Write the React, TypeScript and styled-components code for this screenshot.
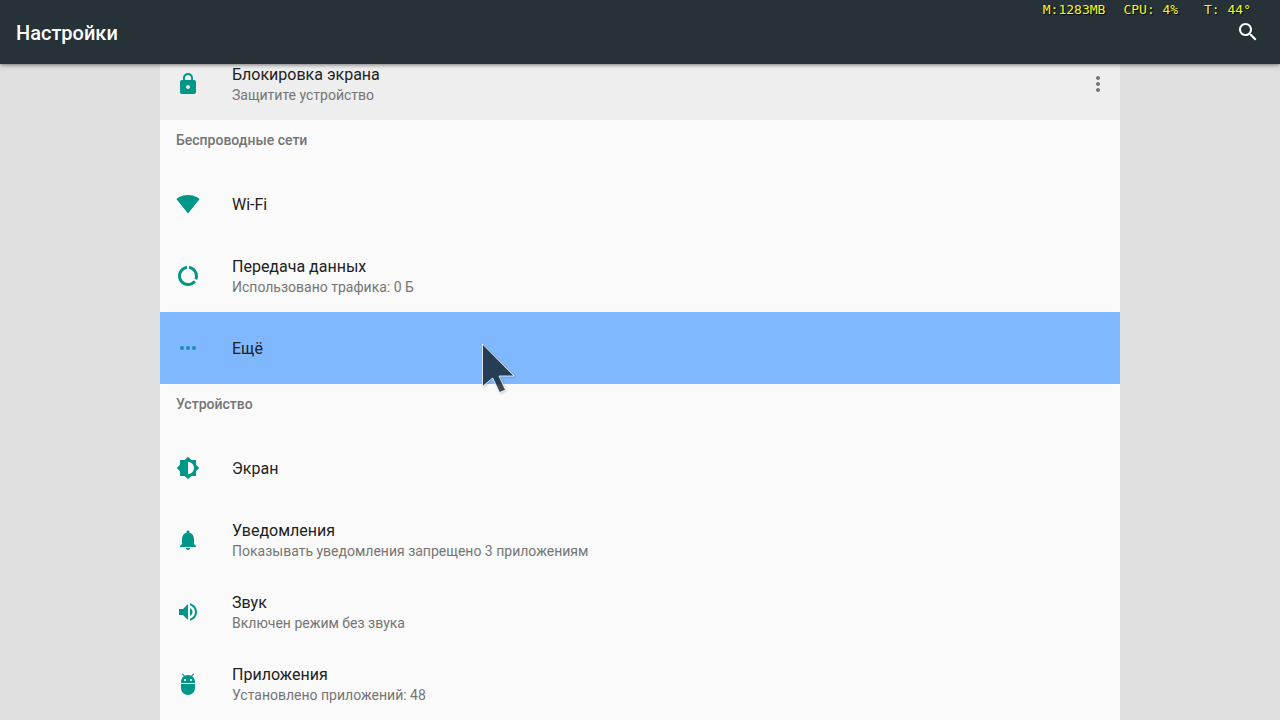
import React from "react";
import styled, { createGlobalStyle } from "styled-components";

const GlobalStyle = createGlobalStyle`
  * { box-sizing: border-box; }
  body {
    margin: 0;
    background: #e0e0e0;
    font-family: Roboto, "Noto Sans", sans-serif;
    color: #212121;
  }
`;

const Page = styled.div`
  display: flex;
  flex-direction: column;
  min-height: 100vh;
`;

const AppBar = styled.header`
  position: sticky;
  top: 0;
  z-index: 2;
  display: flex;
  align-items: center;
  justify-content: space-between;
  height: 64px;
  padding: 0 20px 0 16px;
  background: #263238;
  box-shadow: 0 1px 4px rgba(0, 0, 0, 0.5);
`;

const AppTitle = styled.h1`
  margin: 0;
  padding-top: 2px;
  font-size: 20px;
  line-height: 24px;
  font-weight: 500;
  color: #fff;
`;

const IconButton = styled.button<{ $color: string }>`
  display: flex;
  padding: 0;
  border: 0;
  background: none;
  color: ${(p) => p.$color};
  cursor: pointer;
`;

const Monitor = styled.div`
  position: absolute;
  top: 2px;
  right: 29px;
  display: flex;
  gap: 18px;
  font-family: "DejaVu Sans Mono", monospace;
  font-size: 13px;
  line-height: 16px;
  color: #f4f81a;
  text-shadow: 1px 1px 1px #000;
  white-space: pre;
`;

const Sheet = styled.main`
  flex: 1;
  width: 75%;
  margin: -16px auto 0;
  background: #fafafa;
`;

const Section = styled.section`
  display: flex;
  flex-direction: column;
`;

const SectionTitle = styled.h2`
  height: 48px;
  margin: 0;
  padding: 10px 16px;
  font-size: 14px;
  line-height: 20px;
  font-weight: 500;
  color: #757575;
`;

const Row = styled.div<{ $tone?: string }>`
  position: relative;
  display: flex;
  align-items: center;
  height: 72px;
  padding-right: 10px;
  background: ${(p) => p.$tone ?? "transparent"};
`;

const RowLink = styled.a`
  flex: 1;
  display: flex;
  align-items: center;
  gap: 32px;
  height: 100%;
  padding-left: 16px;
  color: inherit;
  text-decoration: none;
`;

const RowText = styled.span`
  display: flex;
  flex-direction: column;
`;

const RowTitle = styled.span`
  font-size: 16px;
  line-height: 23px;
`;

const RowSummary = styled.span`
  font-size: 14px;
  line-height: 19px;
  color: #757575;
`;

const Glyph = styled.svg<{ $color?: string }>`
  flex: none;
  width: 24px;
  height: 24px;
  fill: ${(p) => p.$color ?? "currentColor"};
`;

const Pointer = styled.svg`
  position: absolute;
  z-index: 1;
  left: 318px;
  top: 26px;
  width: 44px;
  height: 60px;
  pointer-events: none;
  filter: drop-shadow(1px 1px 1px rgba(0, 0, 0, 0.2));
`;

const icons = {
  lock: "M18 8h-1V6c0-2.76-2.24-5-5-5S7 3.24 7 6v2H6c-1.1 0-2 .9-2 2v10c0 1.1.9 2 2 2h12c1.1 0 2-.9 2-2V10c0-1.1-.9-2-2-2zm-6 9c-1.1 0-2-.9-2-2s.9-2 2-2 2 .9 2 2-.9 2-2 2zm3.1-9H8.9V6c0-1.71 1.39-3.1 3.1-3.1 1.71 0 3.1 1.39 3.1 3.1v2z",
  wifi: "M12.01 21.49L23.64 7c-.45-.34-4.93-4-11.64-4C5.28 3 .81 6.66.36 7l11.63 14.49.01.01.01-.01z",
  data: "M13 2.05v3.03c3.39.49 6 3.39 6 6.92 0 .9-.18 1.75-.48 2.54l2.6 1.53c.56-1.24.88-2.62.88-4.07 0-5.18-3.95-9.45-9-9.95zM12 19c-3.87 0-7-3.13-7-7 0-3.53 2.61-6.43 6-6.92V2.05c-5.06.5-9 4.76-9 9.95 0 5.52 4.47 10 9.99 10 3.31 0 6.24-1.61 8.06-4.09l-2.6-1.53C16.17 17.98 14.21 19 12 19z",
  more: "M6 10c-1.1 0-2 .9-2 2s.9 2 2 2 2-.9 2-2-.9-2-2-2zm12 0c-1.1 0-2 .9-2 2s.9 2 2 2 2-.9 2-2-.9-2-2-2zm-6 0c-1.1 0-2 .9-2 2s.9 2 2 2 2-.9 2-2-.9-2-2-2z",
  display:
    "M20 15.31L23.31 12 20 8.69V4h-4.69L12 .69 8.69 4H4v4.69L.69 12 4 15.31V20h4.69L12 23.31 15.31 20H20v-4.69zM12 18V6c3.31 0 6 2.69 6 6s-2.69 6-6 6z",
  bell: "M12 22c1.1 0 2-.9 2-2h-4c0 1.1.89 2 2 2zm6-6v-5c0-3.07-1.64-5.64-4.5-6.32V4c0-.83-.67-1.5-1.5-1.5s-1.5.67-1.5 1.5v.68C7.63 5.36 6 7.92 6 11v5l-2 2v1h16v-1l-2-2z",
  sound:
    "M3 9v6h4l5 5V4L7 9H3zm13.5 3c0-1.77-1.02-3.29-2.5-4.03v8.05c1.48-.73 2.5-2.25 2.5-4.02zM14 3.23v2.06c2.89.86 5 3.54 5 6.71s-2.11 5.85-5 6.71v2.06c4.01-.91 7-4.49 7-8.77s-2.99-7.86-7-8.77z",
  apps: "M5 16c0 3.87 3.13 7 7 7s7-3.13 7-7v-4H5v4zM16.12 4.37l2.1-2.1-.82-.83-2.3 2.31C14.16 3.28 13.12 3 12 3s-2.16.28-3.09.75L6.6 1.44l-.82.83 2.1 2.1C6.14 5.64 5 7.68 5 10v1h14v-1c0-2.32-1.14-4.36-2.88-5.63zM9 9c-.55 0-1-.45-1-1s.45-1 1-1 1 .45 1 1-.45 1-1 1zm6 0c-.55 0-1-.45-1-1s.45-1 1-1 1 .45 1 1-.45 1-1 1z",
  search:
    "M15.5 14h-.79l-.28-.27C15.41 12.59 16 11.11 16 9.5 16 5.91 13.09 3 9.5 3S3 5.91 3 9.5 5.91 16 9.5 16c1.61 0 3.09-.59 4.23-1.57l.27.28v.79l5 4.99L20.49 19l-4.99-5zm-6 0C7.01 14 5 11.99 5 9.5S7.01 5 9.5 5 14 7.01 14 9.5 11.99 14 9.5 14z",
  menu: "M12 8c1.1 0 2-.9 2-2s-.9-2-2-2-2 .9-2 2 .9 2 2 2zm0 2c-1.1 0-2 .9-2 2s.9 2 2 2 2-.9 2-2-.9-2-2-2zm0 6c-1.1 0-2 .9-2 2s.9 2 2 2 2-.9 2-2-.9-2-2-2z",
};

type IconName = keyof typeof icons;

function Icon({ name, color }: { name: IconName; color?: string }) {
  return (
    <Glyph viewBox="0 0 24 24" $color={color} aria-hidden="true">
      <path d={icons[name]} />
    </Glyph>
  );
}

interface ItemProps {
  icon: IconName;
  title: string;
  summary?: string;
  tone?: string;
  iconColor?: string;
  children?: React.ReactNode;
}

function Item({ icon, title, summary, tone, iconColor = "#009688", children }: ItemProps) {
  return (
    <Row $tone={tone}>
      <RowLink href="#">
        <Icon name={icon} color={iconColor} />
        <RowText>
          <RowTitle>{title}</RowTitle>
          {summary && <RowSummary>{summary}</RowSummary>}
        </RowText>
      </RowLink>
      {children}
    </Row>
  );
}

export default function App() {
  return (
    <Page>
      <GlobalStyle />
      <AppBar>
        <AppTitle>Настройки</AppTitle>
        <IconButton $color="#fff" aria-label="Поиск">
          <Icon name="search" />
        </IconButton>
        <Monitor>
          <span>M:1283MB</span>
          <span>CPU: 4%</span>
          <span> T: 44°</span>
        </Monitor>
      </AppBar>
      <Sheet>
        <Item icon="lock" title="Блокировка экрана" summary="Защитите устройство" tone="#eeeeee">
          <IconButton $color="#757575" aria-label="Меню">
            <Icon name="menu" />
          </IconButton>
        </Item>
        <Section>
          <SectionTitle>Беспроводные сети</SectionTitle>
          <Item icon="wifi" title="Wi-Fi" />
          <Item icon="data" title="Передача данных" summary="Использовано трафика: 0 Б" />
          <Item icon="more" title="Ещё" tone="#80b8ff" iconColor="#1a8fb0">
            <Pointer viewBox="0 0 44 60" aria-hidden="true">
              <path
                d="M4.5 6V48.500L14.700 40L21.500 54.500L27.500 52L21 38H36Z"
                fill="#0c1c28"
                fillOpacity="0.75"
                stroke="#fff"
                strokeOpacity="0.8"
              />
            </Pointer>
          </Item>
        </Section>
        <Section>
          <SectionTitle>Устройство</SectionTitle>
          <Item icon="display" title="Экран" />
          <Item icon="bell" title="Уведомления" summary="Показывать уведомления запрещено 3 приложениям" />
          <Item icon="sound" title="Звук" summary="Включен режим без звука" />
          <Item icon="apps" title="Приложения" summary="Установлено приложений: 48" />
        </Section>
      </Sheet>
    </Page>
  );
}
